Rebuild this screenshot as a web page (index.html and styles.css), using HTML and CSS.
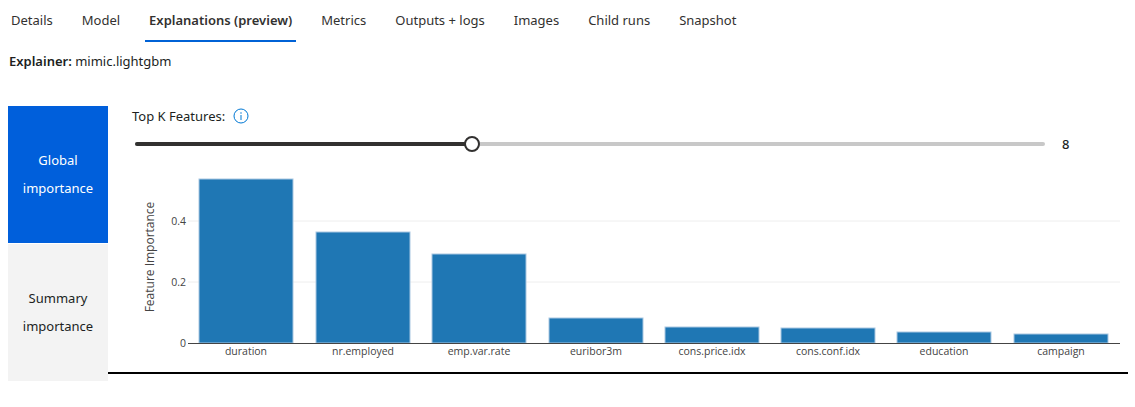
FILE: index.html
```html
<!DOCTYPE html>
<html>
<head>
<meta charset="utf-8">
<link rel="stylesheet" href="styles.css">
</head>
<body>
<nav class="tabs">
  <div class="tab">Details</div>
  <div class="tab">Model</div>
  <div class="tab active">Explanations (preview)</div>
  <div class="tab">Metrics</div>
  <div class="tab">Outputs + logs</div>
  <div class="tab">Images</div>
  <div class="tab">Child runs</div>
  <div class="tab">Snapshot</div>
</nav>
<div class="explainer"><b>Explainer:</b> mimic.lightgbm</div>
<div class="main">
  <div class="side">
    <div class="side-item selected">Global<br>importance</div>
    <div class="side-item">Summary<br>importance</div>
  </div>
  <div class="content">
    <div class="topk">
      <span>Top K Features:</span>
      <svg class="info" width="16" height="16" viewBox="0 0 16 16"><circle cx="8" cy="8" r="7" fill="none" stroke="#0078d4" stroke-width="1"/><rect x="7.5" y="7" width="1" height="5" fill="#0078d4"/><circle cx="8" cy="5" r="0.75" fill="#0078d4"/></svg>
    </div>
    <div class="slider-row">
      <div class="track">
        <div class="fill"></div>
        <div class="thumb"></div>
      </div>
      <div class="value">8</div>
    </div>
    <svg class="chart" width="1020" height="207" viewBox="0 0 1020 207">
      <g class="grid">
        <line x1="80" x2="1012" y1="117" y2="117"/>
        <line x1="80" x2="1012" y1="56" y2="56"/>
      </g>
      <g class="bars">
        <rect x="91" y="14" width="94" height="164"/>
        <rect x="208" y="67" width="94" height="111"/>
        <rect x="324" y="89" width="94" height="89"/>
        <rect x="441" y="153" width="94" height="25"/>
        <rect x="557" y="162" width="94" height="16"/>
        <rect x="673" y="163" width="94" height="15"/>
        <rect x="789" y="167" width="94" height="11"/>
        <rect x="906" y="169" width="94" height="9"/>
      </g>
      <line class="axis" x1="80" x2="1012" y1="178.5" y2="178.5"/>
      <g class="ytick">
        <text x="78" y="182">0</text>
        <text x="78" y="121">0.2</text>
        <text x="78" y="60">0.4</text>
      </g>
      <text class="ytitle" transform="translate(46,92) rotate(-90)">Feature Importance</text>
      <g class="xtick">
        <text x="138" y="190">duration</text>
        <text x="255" y="190">nr.employed</text>
        <text x="371" y="190">emp.var.rate</text>
        <text x="488" y="190">euribor3m</text>
        <text x="604" y="190">cons.price.idx</text>
        <text x="720" y="190">cons.conf.idx</text>
        <text x="836" y="190">education</text>
        <text x="953" y="190">campaign</text>
      </g>
    </svg>
  </div>
</div>
</body>
</html>
```

FILE: styles.css
```css
* { box-sizing: border-box; }
body {
  margin: 0;
  background: #fff;
  font-family: "Segoe UI", "Noto Sans", "Open Sans", sans-serif;
  color: #201f1e;
}
.tabs {
  display: flex;
  gap: 21px;
  padding-left: 7px;
  height: 42px;
}
.tab {
  padding: 0 4px;
  height: 42px;
  line-height: 40px;
  font-size: 13px;
  color: #323130;
  border-bottom: 2px solid transparent;
  white-space: nowrap;
}
.tab.active {
  font-weight: 600;
  border-bottom-color: #0062d6;
}
.explainer {
  font-size: 13px;
  padding-left: 9px;
  margin-top: 10px;
  height: 20px;
  line-height: 18px;
}
.explainer b { font-weight: 600; }
.main {
  display: flex;
  align-items: flex-start;
  margin-top: 34px;
  padding-left: 8px;
}
.side {
  flex: none;
  width: 100px;
  display: flex;
  flex-direction: column;
  gap: 1px;
}
.side-item {
  height: 137px;
  background: #f3f3f3;
  font-size: 13px;
  line-height: 28px;
  text-align: center;
  display: flex;
  align-items: center;
  justify-content: center;
  padding-bottom: 2px;
  color: #201f1e;
}
.side-item.selected {
  background: #005fdb;
  color: #fff;
}
.content {
  flex: none;
  width: 1020px;
  border-bottom: 2px solid #000;
}
.topk {
  display: flex;
  align-items: center;
  gap: 8px;
  padding-left: 24px;
  height: 20px;
  font-size: 13px;
}
.info { display: block; }
.slider-row {
  display: flex;
  align-items: center;
  margin-top: 8px;
  padding-left: 27px;
  height: 20px;
}
.track {
  position: relative;
  width: 910px;
  height: 4px;
  border-radius: 2px;
  background: #c8c8c8;
}
.fill {
  width: 336px;
  height: 4px;
  border-radius: 2px;
  background: #323130;
}
.thumb {
  position: absolute;
  left: 329px;
  top: -6px;
  width: 16px;
  height: 16px;
  border-radius: 50%;
  background: #fff;
  border: 2px solid #323130;
}
.value {
  margin-left: 17px;
  font-size: 13px;
  font-weight: 500;
}
.chart {
  display: block;
  margin-top: 11px;
  font-family: "Open Sans", "Noto Sans", sans-serif;
}
.grid line { stroke: #eee; stroke-width: 1; }
.bars rect { fill: #1f77b4; stroke: #a9c8e2; stroke-width: 1; }
.axis { stroke: #444; stroke-width: 1; }
.ytick text { font-size: 10.5px; fill: #444; text-anchor: end; }
.ytitle { font-size: 12px; fill: #444; text-anchor: middle; }
.xtick text { font-size: 10.5px; fill: #444; text-anchor: middle; }
```
